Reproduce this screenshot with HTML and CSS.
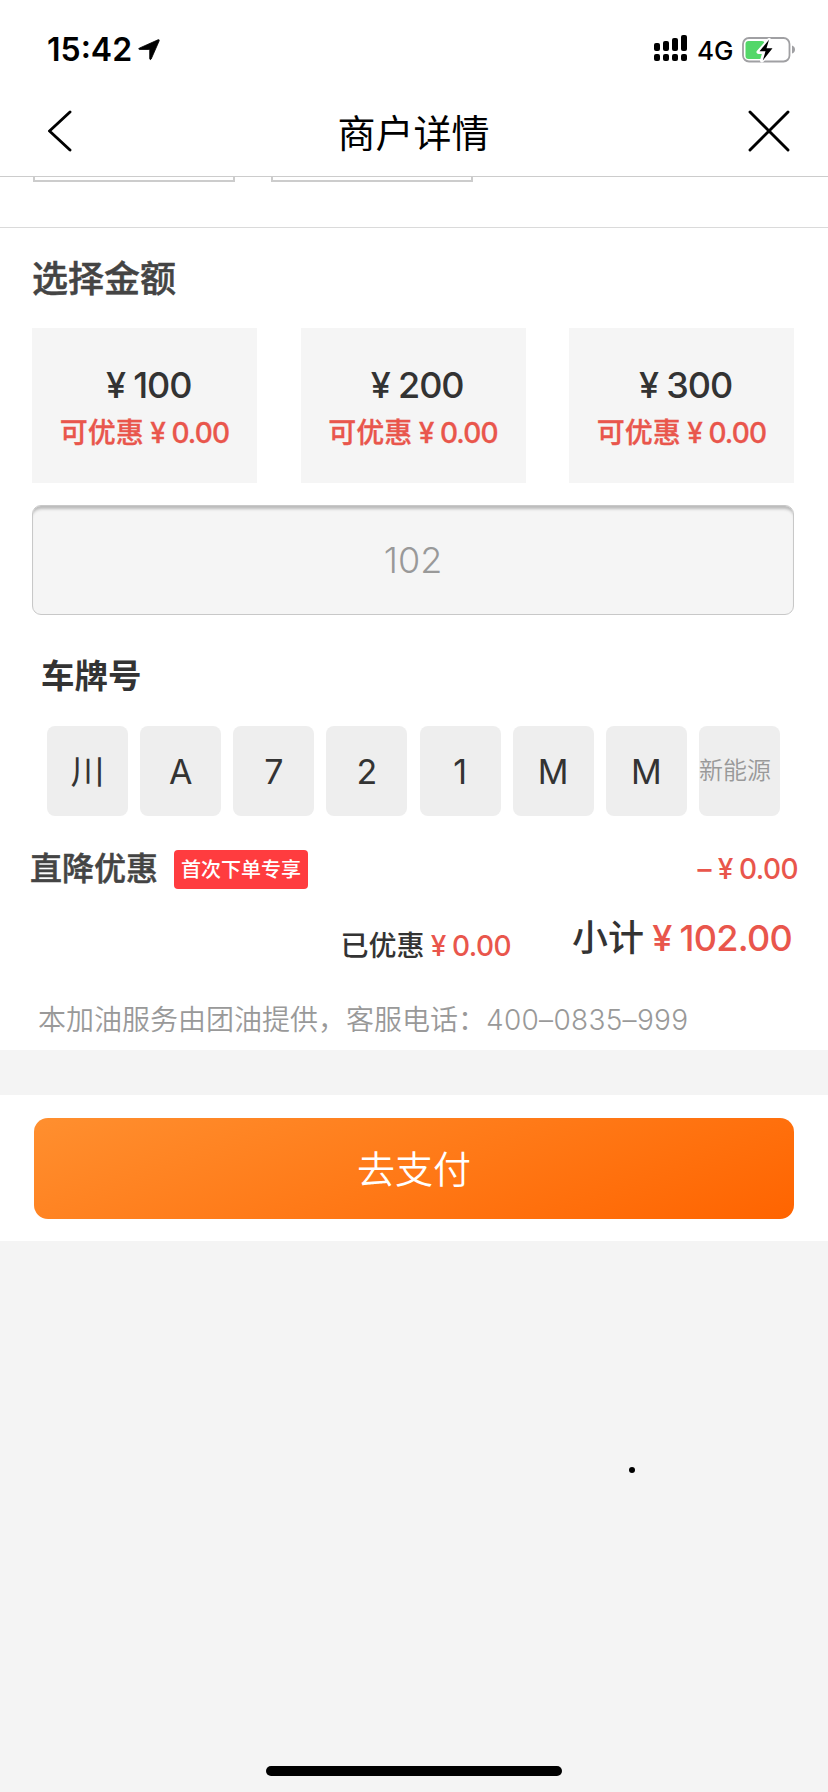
FILE: index.html
```html
<!DOCTYPE html>
<html lang="zh-CN">
<head>
<meta charset="utf-8">
<title>商户详情</title>
<link rel="stylesheet" href="styles.css">
</head>
<body>
<div class="screen">
  <div class="status">
    <span class="time">15:42</span>
    <svg class="locate" width="22" height="22" viewBox="0 0 22 22"><path stroke="#000" stroke-width=".8" d="M1.200 9.200 20 .8q1.600-.5 1.200 1L13.200 20q-.9 1.500-1.500-.2V11.300q0-.8-.8-.8L1.400 10.500q-1.400-.4-.2-1.300Z"/></svg>
    <svg class="signal" width="34" height="28" viewBox="0 0 34 28"><rect x="0" y="8" width="6" height="8" rx="2"/><rect x="9" y="6" width="6" height="10" rx="2"/><rect x="18" y="3" width="6" height="13" rx="2"/><rect x="27" y="0" width="6" height="16" rx="2"/><rect x="0" y="19" width="6" height="7" rx="2"/><rect x="9" y="19" width="6" height="7" rx="2"/><rect x="18" y="19" width="6" height="7" rx="2"/><rect x="27" y="19" width="6" height="7" rx="2"/></svg>
    <span class="network">4G</span>
    <svg class="battery" width="54" height="28" viewBox="0 0 54 28"><rect x="1" y="2" width="46.500" height="23.500" rx="6" fill="none" stroke="#a0a0a3" stroke-width="1.800"/><rect x="3.500" y="5" width="19" height="18" rx="3" fill="#53d769"/><path d="M50 9.500q3 1 3 4t-3 4Z" fill="#a0a0a3"/><path d="M27 4 16.500 16h6L20 24.500 31 12h-6Z" fill="#000" stroke="#fff" stroke-width="4" stroke-linejoin="round"/><path d="M27 3.800 17.500 15.300h6L20.800 24.500 30.500 12.300h-6Z" fill="#000"/></svg>
  </div>
  <div class="navbar">
    <svg class="back" width="24" height="42" viewBox="0 0 24 42"><path d="M22 2 1.500 21 22 40"/></svg>
    <h1 class="title">商户详情</h1>
    <svg class="close" width="42" height="42" viewBox="0 0 42 42"><path d="m2 2 38 38M40 2 2 40"/></svg>
  </div>
  <div class="tabs"><div class="tab"></div><div class="tab"></div></div>
  <div class="order">
    <h2 class="heading">选择金额</h2>
    <div class="amounts">
      <div class="amount"><div class="price"><span class="yen">¥</span><span class="num">100</span></div><div class="saving">可优惠<span class="yen">¥</span><span class="num">0.00</span></div></div>
      <div class="amount"><div class="price"><span class="yen">¥</span><span class="num">200</span></div><div class="saving">可优惠<span class="yen">¥</span><span class="num">0.00</span></div></div>
      <div class="amount"><div class="price"><span class="yen">¥</span><span class="num">300</span></div><div class="saving">可优惠<span class="yen">¥</span><span class="num">0.00</span></div></div>
    </div>
    <div class="custom">102</div>
    <h3 class="plate-title">车牌号</h3>
    <div class="plate">
      <span class="cell">川</span><span class="cell">A</span><span class="cell">7</span><span class="cell">2</span><span class="cell">1</span><span class="cell">M</span><span class="cell">M</span><span class="cell energy">新能源</span>
    </div>
    <div class="discount">
      <span class="discount-name">直降优惠</span><span class="badge">首次下单专享</span><span class="minus">–<span class="yen">¥</span><span class="num">0.00</span></span>
    </div>
    <div class="totals">
      <span class="saved">已优惠<span class="red"><span class="yen">¥</span><span class="num">0.00</span></span></span>
      <span class="subtotal">小计<span class="red"><span class="yen">¥</span><span class="num">102.00</span></span></span>
    </div>
    <p class="service">本加油服务由团油提供，客服电话：<span class="phone">400–0835–999</span></p>
  </div>
  <div class="pay"><div class="pay-button">去支付</div></div>
  <div class="dot"></div>
  <div class="home"></div>
</div>
</body>
</html>
```
FILE: styles.css
```css
* { box-sizing: border-box; }
body { margin: 0; }
h1, h2, h3, p { margin: 0; font-weight: 400; }
.screen {
  position: relative;
  width: 828px;
  height: 1792px;
  overflow: hidden;
  background: #f4f4f4;
  color: #333;
  font-family: Inter, "Noto Sans CJK SC", sans-serif;
  white-space: nowrap;
}
.status { display: flex; align-items: center; height: 88px; padding: 12px 32px 0 47px; background: #fff; color: #000; }
.time { width: 91px; font-size: 32px; font-weight: 600; line-height: 40px; }
.signal { margin: -2px 9px 0 auto; }
.network { width: 36px; margin-right: 9px; padding-top: 2px; font-size: 26px; font-weight: 500; line-height: 32px; }
.navbar { display: flex; align-items: center; justify-content: space-between; height: 89px; padding: 0 38px 2px 48px; border-bottom: 1px solid #ccc; background: #fff; }
.navbar svg { fill: none; stroke: #000; stroke-width: 2.900; stroke-linecap: round; }
.back { margin-right: 7px; }
.title { padding-top: 3px; color: #000; font-size: 38px; line-height: 50px; }
.tabs { display: flex; gap: 36px; height: 51px; padding-left: 33px; border-bottom: 1px solid #dadada; background: #fff; }
.tab { width: 202px; height: 5px; border: 2px solid #ccc; border-top: 0; }
.order { height: 822px; padding-top: 33px; background: #fff; }
.heading { margin-left: 32px; color: #444; font-size: 36px; font-weight: 500; line-height: 36px; -webkit-text-stroke: .5px; }
.amounts { display: flex; justify-content: space-between; margin: 31px 34px 0 32px; }
.amount { width: 225px; height: 155px; padding-top: 34px; background: #f5f5f5; text-align: center; font-weight: 500; }
.price { font-size: 36px; line-height: 46px; }
.yen { margin: 0 .2em 0 .23em; }
.num { letter-spacing: -.03em; }
.saving { margin-top: 6px; font-size: 28px; line-height: 38px; color: #e9564c; -webkit-text-stroke: .3px; }
.custom { height: 110px; margin: 22px 34px 0 32px; border: 1px solid #c8c8c8; border-radius: 9px; background: #f5f5f5; box-shadow: inset 0 5px 3px -2px #bbb; color: #999; font-size: 36px; font-weight: 300; line-height: 109px; text-align: center; }
.plate-title { margin: 41px 0 0 41px; font-size: 33.500px; font-weight: 700; line-height: 40px; }
.plate { display: flex; justify-content: space-between; margin: 30px 48px 0 47px; }
.cell { width: 81px; height: 90px; border-radius: 8px; background: #eee; font-size: 34px; font-weight: 390; line-height: 92px; text-align: center; }
.energy { color: #999; font-size: 24px; font-weight: 350; line-height: 89px; text-align: left; }
.discount { display: flex; align-items: center; height: 40px; margin: 33px 30px 0 30px; }
.discount-name { margin-right: 16px; color: #444; font-size: 32px; font-weight: 500; line-height: 40px; -webkit-text-stroke: .5px; }
.badge { width: 134px; height: 39px; border-radius: 4px; background: #ff3c3f; color: #fff; font-size: 20px; font-weight: 500; line-height: 40px; text-align: center; }
.minus { margin-left: auto; font-size: 28px; font-weight: 500; line-height: 40px; color: #e9564c; }
.totals { display: flex; justify-content: flex-end; gap: 61px; height: 60px; margin: 23px 36px 0 0; font-weight: 500; }
.saved { font-size: 28px; line-height: 68px; }
.subtotal { font-size: 36px; line-height: 53px; }
.totals .num, .minus .num { letter-spacing: -.02em; }
.red { color: #e9564c; }
.service { margin: 29px 0 0 38px; color: #999; font-size: 28px; font-weight: 350; line-height: 38px; }
.phone { font-weight: 300; letter-spacing: .3px; }
.pay { height: 146px; margin-top: 45px; padding: 23px 34px 0; background: #fff; }
.pay-button { height: 101px; border-radius: 14px; background: linear-gradient(160deg, #ff8f2f, #ff6400); color: #fff; font-size: 38px; font-weight: 350; line-height: 103px; text-align: center; }
.dot { position: absolute; left: 629px; top: 1467px; width: 6px; height: 6px; border-radius: 50%; background: #000; }
.home { position: absolute; left: 266px; top: 1766px; width: 296px; height: 10px; border-radius: 5px; background: #000; }
```
